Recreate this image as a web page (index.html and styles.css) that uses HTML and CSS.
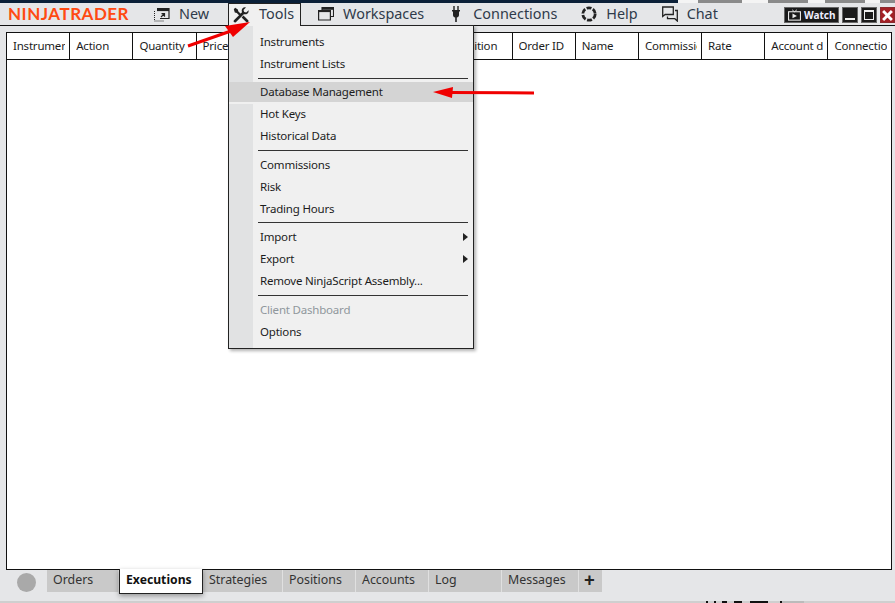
FILE: index.html
```html
<!DOCTYPE html>
<html lang="en">
<head>
<meta charset="utf-8">
<title>NinjaTrader Control Center</title>
<link rel="stylesheet" href="styles.css">
</head>
<body>
<div class="window">
  <div class="strip"></div>
  <header class="menubar">
    <div class="logo">NINJATRADER</div>
    <nav class="menus">
      <div class="menu">
        <svg class="ico" viewBox="0 0 16 16"><path d="M3 2.500h12v10H6" fill="none" stroke="#222" stroke-width="1.200"/><path d="M3 2.500h12v2.600H3z" fill="#222"/><path d="M.5 5v10h10" fill="none" stroke="#222" stroke-dasharray="1 1"/><path d="M7 11l3-3M7.500 7.700h3v3" fill="none" stroke="#222" stroke-width="1.200"/></svg>
        <span>New</span>
      </div>
      <div class="menu open">
        <svg class="ico" viewBox="0 0 16 16"><path d="M.8 2.200L2.200.8l2.600 1.600.6 2 3.400 3.400-1.600 1.600L3.800 6 1.800 5.400z" fill="#222"/><path d="M15.600 3.200l-2.400 2.400-2-.7-.7-2L12.900.4C10.400-.3 8.300 1.600 8.800 4.200l.2 1L1.200 12.900c-.9.9-.8 1.500-.2 2.100s1.300.7 2.100-.1L10.800 7.200c2.800.7 5.300-1.200 4.800-4z" fill="#222"/><path d="M8.600 10.500l1.900-1.900 4.500 4.500c.7.700.7 1.300.1 1.900s-1.200.6-1.900-.1z" fill="#222"/></svg>
        <span>Tools</span>
      </div>
      <div class="menu">
        <svg class="ico" viewBox="0 0 16 16"><path d="M4 4.500V1.500h11.500v9h-3" fill="none" stroke="#222" stroke-width="1.100"/><path d="M4 2h11v1.800H4z" fill="#222"/><path d="M.6 4.500h11.800v9.500H.6z" fill="none" stroke="#222" stroke-width="1.200"/><path d="M.6 4.500h11.800v1.600H.6z" fill="#222"/></svg>
        <span>Workspaces</span>
      </div>
      <div class="menu">
        <svg class="ico" viewBox="0 0 16 16"><path d="M5.300 0h1.400v4h2.600V0h1.400v4H12v1.500H11V9c0 1.500-1 2.400-2.200 2.600V16H7.200v-4.400C6 11.400 5 10.500 5 9V5.500H4V4h1.300z" fill="#222"/></svg>
        <span>Connections</span>
      </div>
      <div class="menu">
        <svg class="ico" viewBox="0 0 16 16"><circle cx="8" cy="8" r="6.200" fill="none" stroke="#222" stroke-width="2.800" stroke-dasharray="5 1.500"/></svg>
        <span>Help</span>
      </div>
      <div class="menu">
        <svg class="ico" viewBox="0 0 16 16"><path d="M.7 1h10.600v7.500H3.200L.7 10.500z" fill="none" stroke="#222" stroke-width="1.300"/><path d="M13 4.500h2.300v10.500l-2.500-2.300H5.500V10.500" fill="none" stroke="#222" stroke-width="1.300"/></svg>
        <span>Chat</span>
      </div>
    </nav>
    <div class="wincontrols">
      <div class="watch">
        <svg class="tv" viewBox="0 0 16 14"><path d="M5 .5l3 2.500 3-2.500" fill="none" stroke="#eee" stroke-width="1"/><rect x=".7" y="3" width="14.600" height="10.300" fill="none" stroke="#eee" stroke-width="1.300"/><path d="M5.500 5.300l5.500 2.900-5.500 2.900z" fill="#eee"/></svg>
        <span>Watch</span>
      </div>
      <div class="winbtn"><span class="min"></span></div>
      <div class="winbtn"><span class="max"></span></div>
      <div class="winbtn close"><svg viewBox="0 0 10 10"><path d="M1 1l8 8M9 1l-8 8" stroke="#fff" stroke-width="2.600"/></svg></div>
    </div>
  </header>

  <main class="panel">
    <div class="grid-head">
      <div class="col"><span>Instrument</span></div>
      <div class="col"><span>Action</span></div>
      <div class="col"><span>Quantity</span></div>
      <div class="col"><span>Price</span></div>
      <div class="col"><span>Time</span></div>
      <div class="col"><span>Entry</span></div>
      <div class="col"><span>Exit</span></div>
      <div class="col"><span>Position</span></div>
      <div class="col"><span>Order ID</span></div>
      <div class="col"><span>Name</span></div>
      <div class="col"><span>Commission</span></div>
      <div class="col"><span>Rate</span></div>
      <div class="col"><span>Account display name</span></div>
      <div class="col"><span>Connection</span></div>
    </div>
  </main>

  <footer class="tabbar">
    <div class="status-dot"></div>
    <div class="tab t-orders">Orders</div>
    <div class="tab active">Executions</div>
    <div class="tab t-strategies">Strategies</div>
    <div class="tab t-positions">Positions</div>
    <div class="tab t-accounts">Accounts</div>
    <div class="tab t-log">Log</div>
    <div class="tab t-messages">Messages</div>
    <div class="tab t-add">+</div>
  </footer>
  <div class="botstrip"></div>
</div>

<div class="dropdown">
  <div class="gutter"></div>
  <ul class="items">
    <li>Instruments</li>
    <li>Instrument Lists</li>
    <li class="sep short"></li>
    <li class="hl">Database Management</li>
    <li>Hot Keys</li>
    <li>Historical Data</li>
    <li class="sep"></li>
    <li>Commissions</li>
    <li>Risk</li>
    <li>Trading Hours</li>
    <li class="sep short high"></li>
    <li class="sub">Import</li>
    <li class="sub">Export</li>
    <li>Remove NinjaScript Assembly...</li>
    <li class="sep"></li>
    <li class="off">Client Dashboard</li>
    <li>Options</li>
  </ul>
</div>

<svg class="arrows" viewBox="0 0 895 603">
  <path d="M188 46L231 31" stroke="#f00000" stroke-width="3" fill="none"/>
  <path d="M250 22L225 26L233 37z" fill="#f00000"/>
  <path d="M534 93L450 92.500" stroke="#f00000" stroke-width="3" fill="none"/>
  <path d="M433 92L453 87L452 98z" fill="#f00000"/>
</svg>
</body>
</html>
```
FILE: styles.css
```css
* { box-sizing: border-box; }
html, body { margin: 0; padding: 0; }
body {
  width: 895px;
  height: 603px;
  overflow: hidden;
  position: relative;
  background: #e5e6e8;
  font-family: "Noto Sans", "Open Sans", sans-serif;
  color: #1c1c1c;
}
.window { display: flex; flex-direction: column; height: 603px; }
.strip {
  height: 3px;
  flex: none;
  background: linear-gradient(90deg, #0b2038 0 678px, #f4f4f4 678px 698px, #8a8a8a 698px 742px, #f4f4f4 742px 768px, #8a8a8a 768px 808px, #f4f4f4 808px 825px, #8a8a8a 825px 865px, #f4f4f4 865px 880px, #8a8a8a 880px 895px);
}
.menubar {
  height: 23px;
  flex: none;
  display: flex;
  align-items: stretch;
  border-bottom: 1px solid #111;
  background: #e5e6e8;
}
.logo {
  width: 149px;
  padding-left: 8px;
  font-family: "Lato", sans-serif;
  font-weight: 700;
  font-size: 17px;
  letter-spacing: 0.5px;
  line-height: 22px;
  color: #ff4a12;
}
.menus { display: flex; gap: 14px; flex: 1; }
.menu {
  display: flex;
  align-items: center;
  gap: 9px;
  padding: 0 5px;
  font-size: 14.400px;
  color: #2f3a4a;
  height: 22px;
}
.menu span { margin-top: -2px; }
.menu.open {
  background: #f0f0f0;
  border: 1px solid #222;
  border-bottom: 0;
  gap: 10px;
  padding: 0 6px 0 4px;
  margin-right: -2px;
  height: 23px;
  position: relative;
  z-index: 3;
}
.menu.open span { margin-top: -3px; }
.ico { width: 16px; height: 16px; flex: none; }
.wincontrols {
  display: flex;
  align-items: flex-start;
  gap: 3px;
  padding: 4px 0 0 0;
}
.watch {
  width: 55px;
  height: 16px;
  background: #1a1a1a;
  border: 1px solid #666;
  color: #eef;
  display: flex;
  align-items: center;
  gap: 3px;
  padding-left: 3px;
  font: 700 10px/13px "Noto Sans", sans-serif;
}
.tv { width: 13px; height: 12px; flex: none; }
.winbtn {
  width: 16px;
  height: 16px;
  background: #1a1a1a;
  border: 1px solid #666;
  display: flex;
  align-items: center;
  justify-content: center;
}
.min { width: 10px; height: 2px; background: #eee; margin-top: 7px; }
.max { width: 10px; height: 10px; border: 1px solid #eee; border-top-width: 2px; }
.close { width: 15px; background: #a32025; border-color: #8c2a2e; }
.close svg { width: 11px; height: 11px; }

.panel {
  margin: 6px 3px 0 6px;
  height: 538px;
  flex: none;
  background: #fff;
  border: 1px solid #111;
}
.grid-head {
  display: grid;
  grid-template-columns: repeat(13, 63.200px) 1fr;
  height: 27px;
  border-bottom: 1px solid #111;
}
.col {
  font-size: 11.500px;
  letter-spacing: -0.2px;
  line-height: 26px;
  padding: 0 4px 0 6px;
  border-right: 1px solid #111;
  white-space: nowrap;
  min-width: 0;
}
.col span { display: block; overflow: hidden; }
.col:last-child { border-right: 0; }

.tabbar {
  flex: 1;
  display: flex;
  align-items: flex-start;
  position: relative;
  padding-left: 17px;
}
.status-dot {
  width: 19px;
  height: 19px;
  border-radius: 50%;
  background: #a9a9a9;
  margin: 3px 11px 0 0;
  flex: none;
}
.tab {
  height: 22px;
  background: #c9c9c9;
  border-right: 1px solid #e0e0e0;
  font-size: 12.400px;
  line-height: 20px;
  padding-left: 6px;
  color: #333;
  flex: none;
}
.t-orders { width: 72px; }
.tab.active {
  width: 84px;
  height: 25px;
  margin-top: -1px;
  background: #fff;
  color: #111;
  font-size: 12.200px;
  font-weight: 700;
  border: 1px solid #222;
  border-top: 0;
  line-height: 22px;
  box-shadow: 0 2px 5px rgba(0,0,0,.35);
  position: relative;
  z-index: 1;
}
.t-strategies { width: 80px; }
.t-positions { width: 73px; }
.t-accounts { width: 73px; }
.t-log { width: 73px; }
.t-messages { width: 77px; }
.t-add { width: 23px; font-size: 19px; font-weight: 700; padding-left: 5px; color: #222; border-right: 0; line-height: 20px; }
.botstrip {
  height: 2px;
  flex: none;
  background: linear-gradient(90deg, #cfcfcf 0 706px, #111 706px 708px, #cfcfcf 708px 714px, #111 714px 716px, #cfcfcf 716px 722px, #111 722px 727px, #cfcfcf 727px 734px, #111 734px 742px, #cfcfcf 742px 750px, #111 750px 768px, #cfcfcf 768px 780px, #111 780px 782px, #bbb 782px 804px, #cfcfcf 804px 895px);
}

.dropdown {
  position: absolute;
  left: 228px;
  top: 25px;
  width: 246px;
  height: 324px;
  background: #f0f0f0;
  border: 1px solid #222;
  box-shadow: 2px 2px 3px rgba(0,0,0,.3);
  display: flex;
  z-index: 2;
}
.gutter { width: 24px; background: #e1e2e3; flex: none; }
.items {
  list-style: none;
  margin: 0 0 0 -24px;
  padding: 6px 0 0;
  flex: 1;
  font-size: 11.500px;
  letter-spacing: -0.2px;
}
.items li {
  height: 22px;
  line-height: 19px;
  padding-left: 31px;
  position: relative;
  color: #1c1c1c;
}
.items li.sep { height: 7px; }
.items li.sep.short { height: 6px; }
.items li.sep::after {
  content: "";
  position: absolute;
  left: 29px;
  right: 5px;
  top: 2px;
  height: 1px;
  background: #333;
}
.items li.sep.high::after { top: 1px; }
.items li.hl { background: #d4d4d4; border-bottom: 2px solid #f0f0f0; }
.items li.off { color: #8f979c; }
.items li.sub::after {
  content: "";
  position: absolute;
  right: 5px;
  top: 6px;
  border-left: 5px solid #222;
  border-top: 4px solid transparent;
  border-bottom: 4px solid transparent;
}
.arrows {
  position: absolute;
  left: 0;
  top: 0;
  width: 895px;
  height: 603px;
  z-index: 5;
  pointer-events: none;
}
```
